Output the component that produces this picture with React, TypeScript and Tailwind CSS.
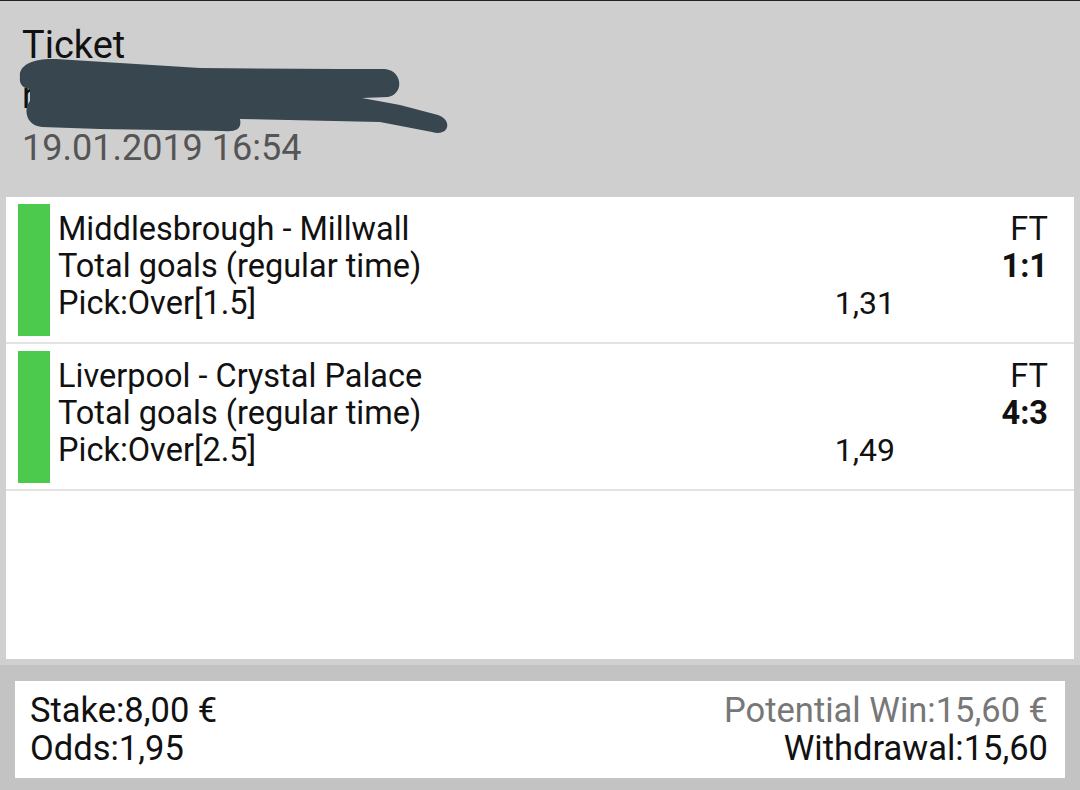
import React from 'react';

const picks = [
  { id: 1, match: 'Middlesbrough - Millwall', market: 'Total goals (regular time)', pick: 'Pick:Over[1.5]', odds: '1,31', status: 'FT', score: '1:1' },
  { id: 2, match: 'Liverpool - Crystal Palace', market: 'Total goals (regular time)', pick: 'Pick:Over[2.5]', odds: '1,49', status: 'FT', score: '4:3' },
];

// hand-drawn redaction over the account line
const Scribble: React.FC = () => (
  <svg className="absolute left-0 top-0" width="460" height="140" viewBox="0 0 460 140">
    <path
      fill="#37464f"
      d="M20 76 C 18 63, 36 57, 56 58 L 200 67 L 340 68 L 385 68 C 403 70, 404 93, 388 96 L 362 97 L 400 104 L 438 114 C 453 119, 449 136, 432 131 L 380 121 L 240 118 C 242 128, 236 131, 224 130 L 100 128 L 42 126 C 26 125, 23 108, 30 100 L 30 88 C 22 87, 19 82, 20 76 Z"
    />
  </svg>
);

export default function App() {
  return (
    <div className="w-[1080px] h-[790px] overflow-hidden bg-[#c3c3c3] flex flex-col font-['Roboto',sans-serif] text-[#111]">
      <div className="h-px bg-[#222]" />

      <div className="relative bg-[#cfcfcf] h-[196px] px-[22px] pt-[19px] text-[36px] leading-[52px]">
        <div className="text-[38px] leading-[50px]">Ticket</div>
        <div>r</div>
        <div className="text-[#555]">19.01.2019 16:54</div>
        <Scribble />
      </div>

      <div className="bg-[#d0d0d0] px-[6px] pb-[6px]">
        <div className="bg-white h-[462px] text-[32.5px] leading-[37px]">
          {picks.map((p) => (
            <div key={p.id} className="flex h-[147px] border-b-2 border-[#e2e2e2]">
              <div className="ml-[12px] mt-[7px] w-[32px] h-[132px] bg-[#4cca4e]" />
              <div className="flex-1 ml-[8px] pt-[14px] pr-[26px]">
                <div className="flex">
                  <span className="flex-1">{p.match}</span>
                  <span className="w-[153px] text-right">{p.status}</span>
                </div>
                <div className="flex">
                  <span className="flex-1">{p.market}</span>
                  <span className="w-[153px] text-right font-bold">{p.score}</span>
                </div>
                <div className="flex">
                  <span className="flex-1">{p.pick}</span>
                  <span className="text-right text-[32px]">{p.odds}</span>
                  <span className="w-[153px]" />
                </div>
              </div>
            </div>
          ))}
        </div>
      </div>

      <div className="px-[15px] pt-[16px]">
        <div className="bg-white h-[97px] pl-[15px] pr-[17px] pt-[10px] text-[34.5px] leading-[38px] flex justify-between">
          <div>
            <div>Stake:8,00 €</div>
            <div>Odds:1,95</div>
          </div>
          <div className="text-right">
            <div className="text-[#777]">Potential Win:15,60 €</div>
            <div>Withdrawal:15,60</div>
          </div>
        </div>
      </div>
    </div>
  );
}
